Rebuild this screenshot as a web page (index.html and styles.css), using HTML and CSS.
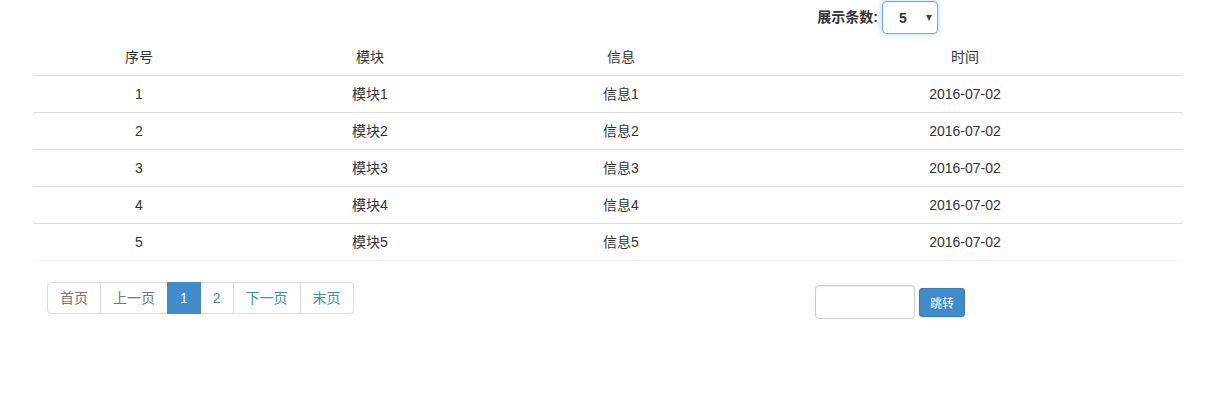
FILE: index.html
```html
<!DOCTYPE html>
<html lang="zh-CN">
<head>
    <meta charset="UTF-8">
    <meta name="viewport" content="width=device-width, initial-scale=1.0">
    <title>分页表格</title>
    <link rel="stylesheet" href="styles.css">
</head>
<body>
    <div class="container">
        <!-- Page size selector -->
        <div class="toolbar">
            <label for="page-size">展示条数:</label>
            <span class="select-wrap">
                <select id="page-size">
                    <option selected>5</option>
                    <option>10</option>
                    <option>20</option>
                </select>
            </span>
        </div>

        <table class="data-table">
            <thead>
                <tr>
                    <th class="col-no">序号</th>
                    <th class="col-module">模块</th>
                    <th class="col-info">信息</th>
                    <th>时间</th>
                </tr>
            </thead>
            <tbody>
                <tr><td>1</td><td>模块1</td><td>信息1</td><td>2016-07-02</td></tr>
                <tr><td>2</td><td>模块2</td><td>信息2</td><td>2016-07-02</td></tr>
                <tr><td>3</td><td>模块3</td><td>信息3</td><td>2016-07-02</td></tr>
                <tr><td>4</td><td>模块4</td><td>信息4</td><td>2016-07-02</td></tr>
                <tr><td>5</td><td>模块5</td><td>信息5</td><td>2016-07-02</td></tr>
            </tbody>
        </table>

        <div class="footer">
            <ul class="pagination">
                <li class="disabled"><a href="#">首页</a></li>
                <li class="disabled"><a href="#">上一页</a></li>
                <li class="active"><a href="#">1</a></li>
                <li><a href="#">2</a></li>
                <li><a href="#">下一页</a></li>
                <li><a href="#">末页</a></li>
            </ul>
            <div class="jump">
                <input type="text" class="jump-input">
                <button class="btn-jump">跳转</button>
            </div>
        </div>
    </div>
</body>
</html>
```

FILE: styles.css
```css
body, html {
    margin: 0;
    padding: 0;
    background: #fff;
    color: #333;
    font-family: "Liberation Sans", "Noto Sans CJK SC", sans-serif;
    font-size: 14px;
    line-height: 20px;
}

.container {
    width: 1150px;
    margin-left: 33px;
}

.toolbar {
    display: flex;
    justify-content: flex-end;
    align-items: flex-start;
    gap: 4px;
    height: 39px;
    padding: 1px 245px 0 0;
    box-sizing: border-box;
}

.toolbar label {
    font-weight: bold;
    line-height: 32px;
}

.select-wrap {
    position: relative;
    display: inline-block;
}

.select-wrap::after {
    content: "";
    position: absolute;
    right: 6px;
    top: 14px;
    border-left: 3px solid transparent;
    border-right: 3px solid transparent;
    border-top: 6px solid #444;
    pointer-events: none;
}

.select-wrap select {
    appearance: none;
    -webkit-appearance: none;
    width: 56px;
    height: 33px;
    padding: 0 0 0 16px;
    font: bold 14px "Liberation Sans", sans-serif;
    color: #333;
    background: #fff;
    border: 1px solid #66afe9;
    border-radius: 4px;
    box-shadow: inset 0 1px 1px rgba(0,0,0,.075), 0 0 6px rgba(102,175,233,.5);
    outline: none;
}

.data-table {
    width: 100%;
    border-collapse: collapse;
}

.data-table th,
.data-table td {
    padding: 8px;
    text-align: center;
    font-weight: normal;
    border-bottom: 1px solid #ddd;
}

.data-table tbody tr:last-child td {
    border-bottom-color: #f3f3f3;
}

.col-no { width: 196px; }
.col-module { width: 234px; }
.col-info { width: 236px; }

.footer {
    display: grid;
    grid-template-columns: 782px auto;
    margin-top: 21px;
}

.pagination {
    display: flex;
    list-style: none;
    margin: 0 0 0 14px;
    padding: 0;
}

.pagination li a {
    display: block;
    padding: 5px 12px;
    margin-left: -1px;
    color: #428bca;
    text-decoration: none;
    border: 1px solid #ddd;
    background: #fff;
}

.pagination li:first-child a {
    margin-left: 0;
    border-radius: 4px 0 0 4px;
}

.pagination li:last-child a {
    border-radius: 0 4px 4px 0;
}

.pagination li.disabled a {
    color: #777;
}

.pagination li.active a {
    color: #fff;
    background: #428bca;
    border-color: #428bca;
    position: relative;
}

.jump {
    display: flex;
    align-items: center;
    gap: 4px;
    margin-top: 3px;
    align-self: start;
}

.jump-input {
    width: 100px;
    height: 34px;
    box-sizing: border-box;
    border: 1px solid #ccc;
    border-radius: 4px;
    box-shadow: inset 0 1px 1px rgba(0,0,0,.075);
    padding: 6px 12px;
}

.btn-jump {
    height: 29px;
    padding: 0 10px;
    font-size: 12px;
    font-family: "Liberation Sans", "Noto Sans CJK SC", sans-serif;
    color: #fff;
    background: #428bca;
    border: 1px solid #357ebd;
    border-radius: 3px;
}
```
